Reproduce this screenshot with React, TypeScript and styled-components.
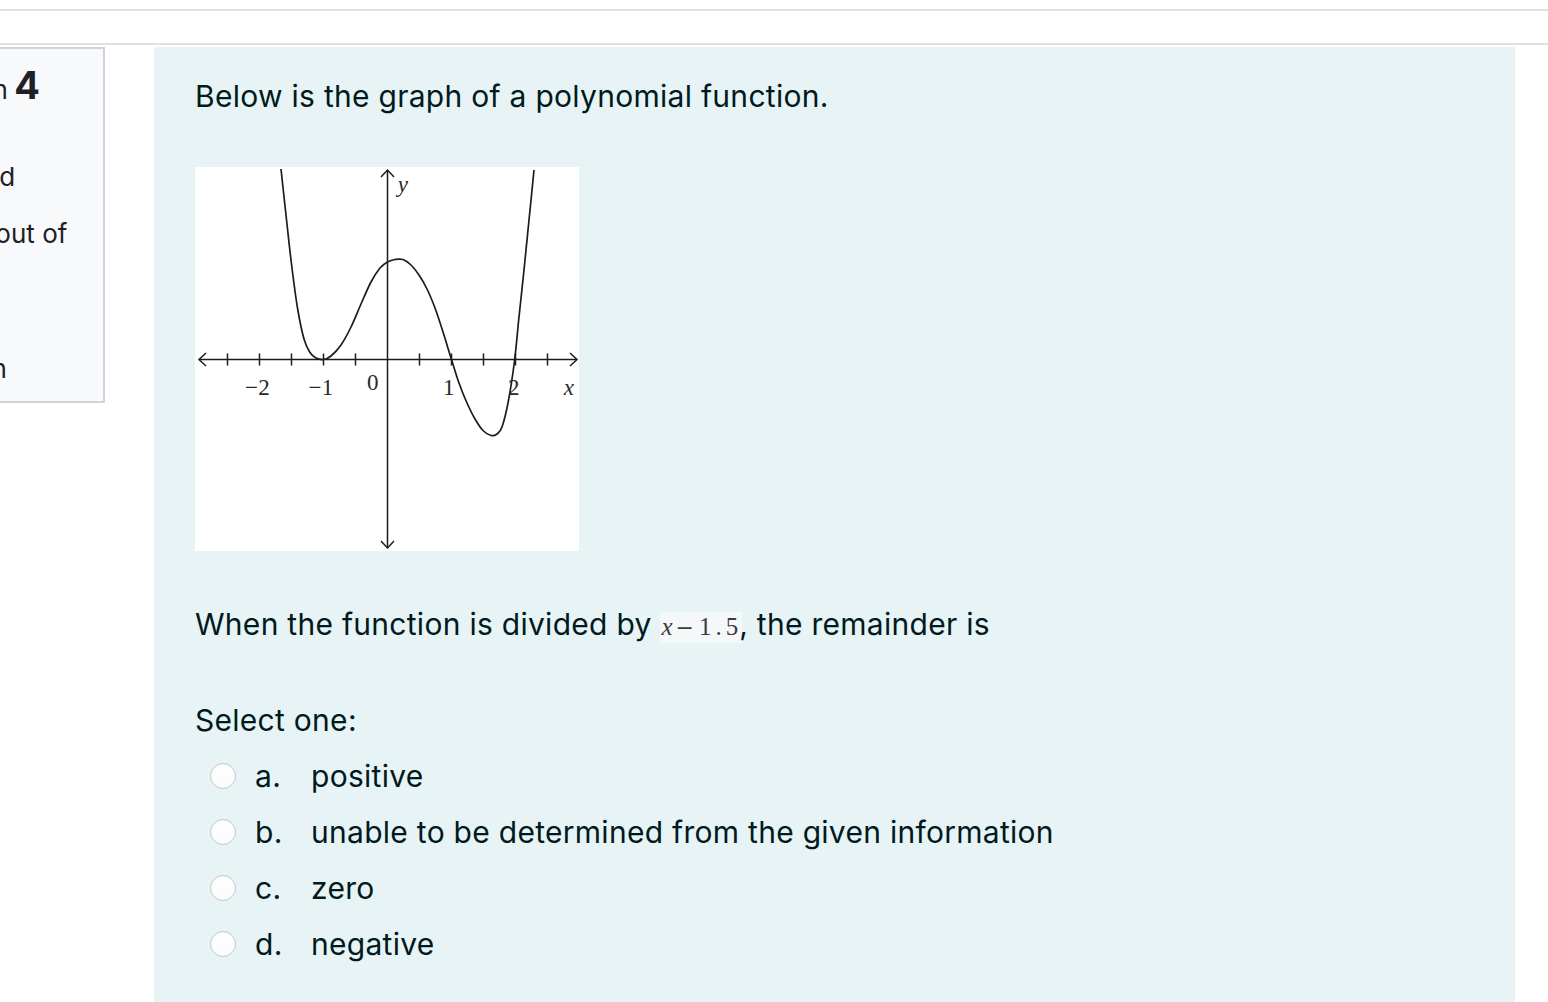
import React from 'react';
import styled, { createGlobalStyle } from 'styled-components';

const GlobalStyle = createGlobalStyle`
  html, body {
    margin: 0;
    padding: 0;
    background: #ffffff;
    overflow: hidden;
  }
  body {
    font-family: Inter, "Noto Sans", "Liberation Sans", sans-serif;
    color: #001a1e;
  }
`;

const Page = styled.div`
  width: 1548px;
  height: 1002px;
  overflow: hidden;
`;

const TopRule = styled.div`
  height: 9px;
  border-bottom: 2px solid #dfe1e3;
`;

const NavRule = styled.div`
  height: 32px;
  border-bottom: 2px solid #dfe1e3;
`;

const Question = styled.div`
  display: flex;
  align-items: flex-start;
  margin-top: 2px;
`;

// info column on the left, most of it is scrolled out of view
const Info = styled.div`
  box-sizing: border-box;
  flex: none;
  width: 220px;
  margin-left: -115px;
  padding: 16px 35px 13px 8px;
  background: #f8f9fa;
  border: 2px solid #cfd4da;
  color: #1d2125;
  font-size: 26px;
  line-height: 39px;
`;

const Title = styled.h3`
  margin: 0;
  font-size: 26px;
  font-weight: 400;
  line-height: 50px;
  white-space: nowrap;
`;

const TitleWord = styled.span`
  margin-left: 3px;
  margin-right: -1px;
`;

const QNo = styled.span`
  font-size: 38px;
  font-weight: 700;
  line-height: 1;
`;

const InfoLine = styled.div<{ $gap: number; $indent?: number }>`
  margin-top: ${(p) => p.$gap}px;
  padding-left: ${(p) => p.$indent || 0}px;
`;

const Formulation = styled.div`
  flex: none;
  box-sizing: border-box;
  width: 1361px;
  min-height: 1000px;
  margin-left: 49px;
  padding: 27px 41px 40px 41px;
  background: #e7f3f5;
  font-size: 30px;
  line-height: 45px;
  letter-spacing: 0.28px;
`;

const Para = styled.p<{ $after: number }>`
  margin: 0 0 ${(p) => p.$after}px 0;
`;

const GraphBox = styled.div`
  width: 384px;
  height: 384px;
  background: #ffffff;
  margin-bottom: 51px;
  svg {
    display: block;
  }
`;

const MathBox = styled.span`
  display: inline-block;
  padding: 0 0 0 1px;
  margin-right: -3px;
  background: #f4f8f9;
  color: #3c3c3c;
  font-family: "Liberation Serif", "DejaVu Serif", serif;
  font-size: 25px;
  line-height: 30px;
  letter-spacing: 0;
  i {
    font-style: italic;
  }
`;

const MathOp = styled.span`
  margin: 0 5px 0 3px;
  font-family: "DejaVu Sans", sans-serif;
  font-size: 22px;
`;

const MathNum = styled.span`
  letter-spacing: 4px;
`;

const Answers = styled.div`
  margin-left: 15px;
  margin-top: 1px;
`;

const Row = styled.label`
  display: flex;
  align-items: center;
  height: 56px;
  line-height: 56px;
  cursor: pointer;
`;

const Radio = styled.span`
  box-sizing: border-box;
  flex: none;
  width: 26px;
  height: 26px;
  margin-right: 19px;
  border-radius: 50%;
  border: 1px solid #c4c7c9;
  background: linear-gradient(#ffffff, #fbfbfb);
  box-shadow: inset 0 1px 1px rgba(0, 0, 0, 0.04);
`;

const Letter = styled.span`
  flex: none;
  width: 56px;
`;

type Pt = [number, number];

const curve: Pt[] = [
  [86, 2], [91, 48], [96, 93], [102.5, 141], [109, 172], [115, 185.5],
  [121, 191], [128.5, 192.5], [136, 189], [146, 178], [156, 160],
  [166, 137], [176, 115], [185, 101], [192.5, 95], [200, 92.5],
  [208, 92.5], [216, 98], [224, 108], [232, 122], [240, 141],
  [248, 165], [256.5, 192.5], [264, 216], [272, 236], [280, 252],
  [288, 263.5], [296, 268.5], [302, 267], [307, 260], [313, 236],
  [319.5, 194], [324, 150], [329, 103], [334, 53], [339, 3],
];

function smooth(p: Pt[]): string {
  let d = `M${p[0][0]},${p[0][1]}`;
  for (let i = 0; i < p.length - 1; i++) {
    const p0 = p[i - 1] || p[i];
    const p1 = p[i];
    const p2 = p[i + 1];
    const p3 = p[i + 2] || p2;
    const c1x = p1[0] + (p2[0] - p0[0]) / 6;
    const c1y = p1[1] + (p2[1] - p0[1]) / 6;
    const c2x = p2[0] - (p3[0] - p1[0]) / 6;
    const c2y = p2[1] - (p3[1] - p1[1]) / 6;
    d += ` C${c1x.toFixed(1)},${c1y.toFixed(1)} ${c2x.toFixed(1)},${c2y.toFixed(1)} ${p2[0]},${p2[1]}`;
  }
  return d;
}

const ticks = [32.5, 64.5, 96.5, 128.5, 160.5, 224.5, 256.5, 288.5, 320.5, 352.5];

const labelFont = { fontFamily: '"Liberation Serif", "DejaVu Serif", serif', fontSize: 23 };

const Graph = () => (
  <svg width="384" height="384" viewBox="0 0 384 384">
    <g stroke="#1c1c1c" strokeWidth="1.5" fill="none">
      <line x1="4" y1="192.5" x2="382" y2="192.5" />
      <polyline points="11,186 4,192.5 11,199" />
      <polyline points="375,186 382,192.5 375,199" />
      <line x1="192.5" y1="3" x2="192.5" y2="381" />
      <polyline points="186,10 192.5,3 199,10" />
      <polyline points="186,374 192.5,381 199,374" />
      {ticks.map((x) => (
        <line key={x} x1={x} y1="186.5" x2={x} y2="198.5" />
      ))}
      <path d={smooth(curve)} strokeWidth="1.7" />
    </g>
    <g fill="#2a2a2a" textAnchor="middle" style={labelFont}>
      <text x="62.5" y="228">−2</text>
      <text x="126" y="228">−1</text>
      <text x="178" y="223">0</text>
      <text x="254" y="228">1</text>
      <text x="319" y="228">2</text>
      <text x="374" y="228" fontStyle="italic">x</text>
      <text x="208" y="25" fontStyle="italic">y</text>
    </g>
  </svg>
);

const FlagIcon = () => (
  <svg width="20" height="20" viewBox="0 0 20 20" style={{ marginRight: 6, verticalAlign: -2 }}>
    <path d="M4 2v16M4 3h11l-3 4 3 4H4" stroke="#1d2125" strokeWidth="2" fill="none" />
  </svg>
);

const options = [
  ['a.', 'positive'],
  ['b.', 'unable to be determined from the given information'],
  ['c.', 'zero'],
  ['d.', 'negative'],
];

export default function App() {
  return (
    <Page>
      <GlobalStyle />
      <TopRule />
      <NavRule />
      <Question>
        <Info>
          <Title>
            <TitleWord>Question </TitleWord>
            <QNo>4</QNo>
          </Title>
          <InfoLine $gap={3}>Not yet answered</InfoLine>
          <InfoLine $gap={18}>Marked out of 1.00</InfoLine>
          <InfoLine $gap={18} $indent={6}>
            <FlagIcon />
            Flag question
          </InfoLine>
        </Info>
        <Formulation>
          <Para $after={48}>Below is the graph of a polynomial function.</Para>
          <GraphBox>
            <Graph />
          </GraphBox>
          <Para $after={51}>
            When the function is divided by{' '}
            <MathBox>
              <i>x</i>
              <MathOp>−</MathOp>
              <MathNum>1.5</MathNum>
            </MathBox>
            , the remainder is
          </Para>
          <Para $after={5}>Select one:</Para>
          <Answers>
            {options.map(([l, t]) => (
              <Row key={l}>
                <Radio />
                <Letter>{l}</Letter>
                <span>{t}</span>
              </Row>
            ))}
          </Answers>
        </Formulation>
      </Question>
    </Page>
  );
}
